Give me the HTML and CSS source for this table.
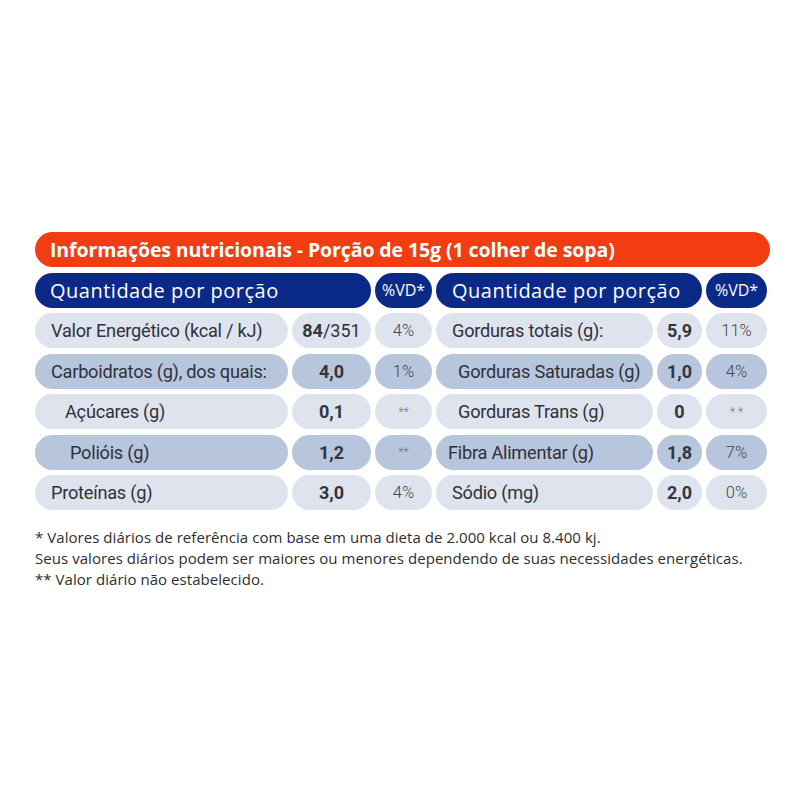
FILE: index.html
```html
<!DOCTYPE html>
<html lang="pt-BR">
<head>
<meta charset="utf-8">
<title>Informações nutricionais</title>
<link rel="stylesheet" href="styles.css">
</head>
<body>
<main class="page">
  <section class="table">
    <div class="title">Informações nutricionais - Porção de 15g (1 colher de sopa)</div>

    <div class="head head-l">Quantidade por porção</div>
    <div class="head vd-head">%VD*</div>
    <div class="head head-r">Quantidade por porção</div>
    <div class="head vd-head">%VD*</div>

    <div class="cell label light">Valor Energético (kcal / kJ)</div>
    <div class="cell val light"><b>84</b>/351</div>
    <div class="cell vd light">4%</div>
    <div class="cell label light">Gorduras totais (g):</div>
    <div class="cell val light"><b>5,9</b></div>
    <div class="cell vd light">11%</div>

    <div class="cell label dark">Carboidratos (g), dos quais:</div>
    <div class="cell val dark"><b>4,0</b></div>
    <div class="cell vd dark">1%</div>
    <div class="cell label dark ind-2">Gorduras Saturadas (g)</div>
    <div class="cell val dark"><b>1,0</b></div>
    <div class="cell vd dark">4%</div>

    <div class="cell label light ind-1">Açúcares (g)</div>
    <div class="cell val light"><b>0,1</b></div>
    <div class="cell vd light small">**</div>
    <div class="cell label light ind-2">Gorduras Trans (g)</div>
    <div class="cell val light"><b>0</b></div>
    <div class="cell vd light small">* *</div>

    <div class="cell label dark ind-3">Polióis (g)</div>
    <div class="cell val dark"><b>1,2</b></div>
    <div class="cell vd dark small">**</div>
    <div class="cell label dark ind-0">Fibra Alimentar (g)</div>
    <div class="cell val dark"><b>1,8</b></div>
    <div class="cell vd dark">7%</div>

    <div class="cell label light">Proteínas (g)</div>
    <div class="cell val light"><b>3,0</b></div>
    <div class="cell vd light">4%</div>
    <div class="cell label light">Sódio (mg)</div>
    <div class="cell val light"><b>2,0</b></div>
    <div class="cell vd light">0%</div>
  </section>

  <section class="notes">
    <p>* Valores diários de referência com base em uma dieta de 2.000 kcal ou 8.400 kj.</p>
    <p>Seus valores diários podem ser maiores ou menores dependendo de suas necessidades energéticas.</p>
    <p>** Valor diário não estabelecido.</p>
  </section>
</main>
</body>
</html>
```

FILE: styles.css
```css
html, body {
  margin: 0;
  padding: 0;
  background: #ffffff;
}

.page {
  width: 800px;
  height: 800px;
  padding: 232px 0 0 35px;
  box-sizing: border-box;
}

.table {
  display: grid;
  grid-template-columns: 253px 79px 57px 217px 45px 61px;
  grid-auto-rows: 35px;
  column-gap: 4px;
  row-gap: 5.5px;
  font-family: Roboto, "Liberation Sans", sans-serif;
}

.title {
  grid-column: 1 / 7;
  margin-right: -3px;
  background: #f23d12;
  color: #ffffff;
  border-radius: 18px;
  font-family: "Open Sans", sans-serif;
  font-weight: 700;
  font-size: 19.5px;
  letter-spacing: -0.1px;
  display: flex;
  align-items: center;
  padding-left: 15px;
}

.head {
  background: #0b2a87;
  color: #ffffff;
  border-radius: 18px;
  display: flex;
  align-items: center;
  font-family: "Open Sans", sans-serif;
  font-size: 20px;
  letter-spacing: 0.5px;
}

.head-l {
  grid-column: 1 / 3;
  padding-left: 15px;
}

.head-r {
  grid-column: 4 / 6;
  padding-left: 16px;
}

.vd-head {
  justify-content: center;
  font-size: 16px;
  letter-spacing: 0;
}

.cell {
  border-radius: 18px;
  display: flex;
  align-items: center;
  color: #2f323a;
  font-size: 18.2px;
}

.light { background: #dfe3ee; }
.dark  { background: #b7c5dd; }

.label {
  padding-left: 16px;
  letter-spacing: -0.25px;
}

.ind-0 { padding-left: 12px; }
.ind-1 { padding-left: 30px; }
.ind-2 { padding-left: 22px; }
.ind-3 { padding-left: 35px; }

.val {
  justify-content: center;
  font-size: 18px;
}

.val b {
  font-weight: 700;
  color: #33363d;
}

.vd {
  justify-content: center;
  font-size: 16.5px;
  font-weight: 300;
  color: #44474e;
}

.small {
  font-size: 12px;
  color: #70737a;
}

.notes {
  margin-top: 17px;
  font-family: "Open Sans", sans-serif;
  font-size: 15px;
  color: #2e2e30;
  letter-spacing: 0.05px;
}

.notes p {
  margin: 0;
  line-height: 21px;
}
```
